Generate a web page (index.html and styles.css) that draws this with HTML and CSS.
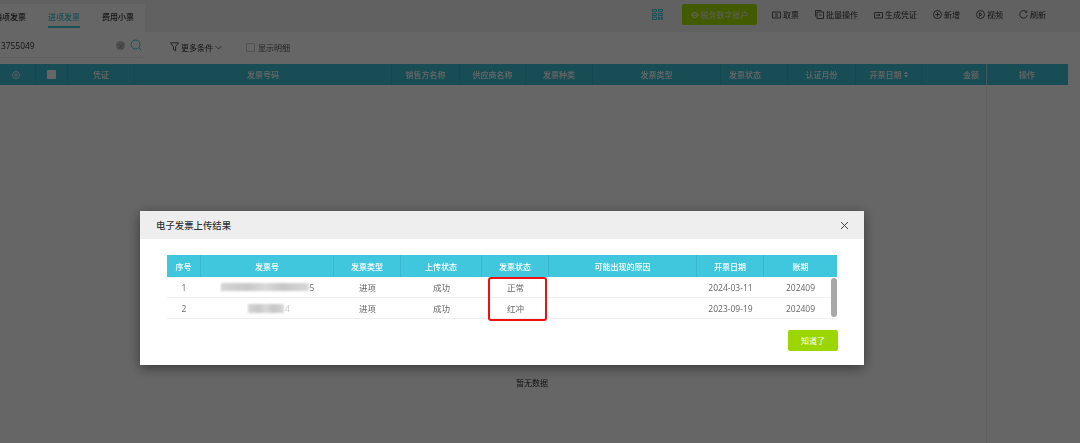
FILE: index.html
```html
<!DOCTYPE html>
<html lang="zh-CN">
<head>
<meta charset="utf-8">
<title>电子发票上传结果</title>
<link rel="stylesheet" href="styles.css">
</head>
<body>
<div class="page">
  <header class="topbar">
    <nav class="tabs">
      <span class="tab">销项发票</span>
      <span class="tab active">进项发票</span>
      <span class="tab">费用小票</span>
    </nav>
    <div class="actions">
      <svg class="qr" width="11" height="11" viewBox="0 0 11 11"><path d="M.5.500h4v2h-4zM6.500.500h4v2h-4zM.5 4.500h4v2h-4zM6.500 4.500h4v2h-4zM.5 8h4v2.500h-4zM6.500 8h1.200v2.500H6.500zM9.300 8h1.200v2.500H9.300z" fill="none" stroke="#41c7dd" stroke-width="1"/></svg>
      <button class="digital"><svg width="8" height="8" viewBox="0 0 8 8"><circle cx="4" cy="4" r="2.600" fill="none" stroke="#fff" stroke-width=".8"/><path d="M0 4h8" stroke="#fff" stroke-width=".8"/></svg>税务数字账户</button>
      <span class="action"><svg width="9" height="8" viewBox="0 0 9 8"><path d="M.5 1h8v6h-8zM3 3h3M3 5h3" fill="none" stroke="#333" stroke-width=".8"/></svg>取票</span>
      <span class="action"><svg width="9" height="9" viewBox="0 0 9 9"><path d="M.5 6.500v-6h6M2 2h6.500v6.500H2zM3.800 5h3" fill="none" stroke="#333" stroke-width=".8"/></svg>批量操作</span>
      <span class="action"><svg width="9" height="8" viewBox="0 0 9 8"><path d="M.5 1.500V7h8V1.500zM2 4h4M4.800 3l1.200 1-1.200 1" fill="none" stroke="#333" stroke-width=".8"/></svg>生成凭证</span>
      <span class="action"><svg width="9" height="9" viewBox="0 0 9 9"><circle cx="4.500" cy="4.500" r="4" fill="none" stroke="#333" stroke-width=".8"/><path d="M4.500 2.300v4.400M2.300 4.500h4.400" stroke="#333" stroke-width=".8"/></svg>新增</span>
      <span class="action"><svg width="9" height="9" viewBox="0 0 9 9"><circle cx="4.500" cy="4.500" r="4" fill="none" stroke="#333" stroke-width=".8"/><path d="M3.500 2.800l2.500 1.700-2.500 1.700z" fill="none" stroke="#333" stroke-width=".8"/></svg>视频</span>
      <span class="action"><svg width="9" height="9" viewBox="0 0 9 9"><path d="M7.500 2A3.800 3.800 0 1 0 8.300 5M7.800.6V2.400H6" fill="none" stroke="#333" stroke-width=".8"/></svg>刷新</span>
    </div>
  </header>

  <section class="filters">
    <div class="search">
      <span class="search-value">3755049</span>
      <span class="clear">×</span>
      <svg width="12" height="12" viewBox="0 0 12 12"><circle cx="5.500" cy="5.500" r="4.500" fill="none" stroke="#41c7dd" stroke-width="1"/><path d="M8.800 8.800l2.500 2.500" stroke="#41c7dd"/></svg>
    </div>
    <span class="more"><svg width="9" height="10" viewBox="0 0 9 10"><path d="M.5.800h8L5.600 4.500v4.300L3.400 7.500v-3z" fill="none" stroke="#333" stroke-width=".8"/></svg>更多条件<svg width="7" height="5" viewBox="0 0 7 5"><path d="M.5 1l3 3 3-3" fill="none" stroke="#333" stroke-width=".7"/></svg></span>
    <label class="detail"><span class="check"></span>显示明细</label>
  </section>

  <div class="grid-head">
    <span class="gear"><svg width="8" height="8" viewBox="0 0 8 8"><circle cx="4" cy="4" r="3.500" fill="none" stroke="#fff" stroke-width=".8"/><circle cx="4" cy="4" r="1.300" fill="none" stroke="#fff" stroke-width=".8"/></svg></span>
    <span><i class="head-check"></i></span>
    <span>凭证</span>
    <span>发票号码</span>
    <span>销售方名称</span>
    <span>供应商名称</span>
    <span>发票种类</span>
    <span>发票类型</span>
    <span class="status">发票状态</span>
    <span>认证月份</span>
    <span>开票日期 <svg width="4" height="7" viewBox="0 0 4 7"><path d="M0 3h4L2 .5zM0 4h4L2 6.500z" fill="#fff"/></svg></span>
    <span class="amount">金额</span>
    <span class="ops">操作</span>
  </div>
  <div class="grid-body">
    <div class="empty">暂无数据</div>
  </div>
</div>

<div class="mask"></div>

<div class="modal">
  <div class="modal-head">
    <span>电子发票上传结果</span>
    <svg width="9" height="9" viewBox="0 0 9 9"><path d="M1 1l7 7M8 1l-7 7" stroke="#444" stroke-width="1"/></svg>
  </div>
  <div class="modal-body">
    <div class="result">
      <div class="row head">
        <span>序号</span><span>发票号</span><span>发票类型</span><span>上传状态</span><span>发票状态</span><span>可能出现的原因</span><span>开票日期</span><span>账期</span>
      </div>
      <div class="row">
        <span>1</span><span class="masked"><i class="blur long"></i>5</span><span>进项</span><span>成功</span><span>正常</span><span></span><span>2024-03-11</span><span>202409</span>
      </div>
      <div class="row">
        <span>2</span><span class="masked"><i class="blur short"></i><b class="faint">4</b></span><span>进项</span><span>成功</span><span>红冲</span><span></span><span>2023-09-19</span><span>202409</span>
      </div>
      <div class="scroll"></div>
      <div class="mark"></div>
    </div>
    <div class="foot"><button class="ok">知道了</button></div>
  </div>
</div>
</body>
</html>
```

FILE: styles.css
```css
* { box-sizing: border-box; }
html, body { margin: 0; height: 100%; overflow: hidden; }
body {
  font-family: "Noto Sans CJK SC", "Open Sans", sans-serif;
  font-size: 8px;
  color: #333;
  background: #fff;
  filter: blur(.3px);
}
button { font-family: inherit; border: 0; padding: 0; }
svg { display: block; flex: none; }

.page { display: flex; flex-direction: column; height: 443px; }

.topbar {
  display: flex;
  justify-content: space-between;
  height: 32px;
  flex: none;
  background: #f2f2f2;
}
.tabs {
  display: flex;
  gap: 22px;
  height: 28px;
  margin-top: 4px;
  margin-left: -6px;
  width: 151px;
  background: #fff;
  font-weight: 500;
}
.tab { display: block; height: 24px; width: 32px; line-height: 26px; white-space: nowrap; }
.tab.active { color: #41c7dd; border-bottom: 2px solid #41c7dd; }

.actions { display: flex; align-items: center; height: 29px; padding-right: 34px; }
.qr { margin-right: 19px; }
.digital {
  display: flex;
  align-items: center;
  justify-content: center;
  gap: 2px;
  width: 75px;
  height: 21px;
  margin-right: 15px;
  border-radius: 2px;
  background: #a6e000;
  color: #e8e8e8;
  font-size: 8px;
}
.action { display: flex; align-items: center; gap: 2px; white-space: nowrap; margin-right: 16px; }
.action:last-child { margin-right: 0; }

.filters { display: flex; align-items: center; height: 32px; flex: none; }
.search {
  display: flex;
  align-items: center;
  width: 143px;
  height: 24px;
  padding: 0 1px;
  border-bottom: 1px solid #eee;
  margin-top: -5px;
}
.search-value { flex: 1; font-family: "Open Sans", sans-serif; font-size: 8.400px; }
.clear {
  width: 9px;
  height: 9px;
  margin-right: 5px;
  border-radius: 50%;
  background: #c4c4c4;
  color: #888;
  font-size: 8px;
  line-height: 9px;
  text-align: center;
}
.more { display: flex; align-items: center; gap: 2px; margin-left: 27px; margin-top: -2px; }
.detail { display: flex; align-items: center; gap: 3px; margin-left: 24px; margin-top: -2px; color: #555; }
.check { width: 9px; height: 9px; border: 1px solid #ccc; border-radius: 1px; }

.grid-head {
  display: grid;
  grid-template-columns: 36px 32px 67px 257px 68px 66px 67px 128px 67px 68px 66px 64px 81px;
  width: 1068px;
  height: 21px;
  flex: none;
  background: #3fc0d4;
  color: #fff;
  font-weight: 500;
}
.grid-head > span {
  display: flex;
  align-items: center;
  justify-content: center;
  gap: 2px;
  border-right: 1px solid #37b4c8;
}
.grid-head > .gear { padding-right: 4px; }
.grid-head > .status { padding-right: 18px; }
.grid-head > .amount { justify-content: flex-end; padding-right: 6px; }
.grid-head > .ops { border-left: 1px solid #9fe3ee; border-right: 0; }
.head-check { display: block; width: 9px; height: 9px; border-radius: 1px; background: #fff; }

.grid-body { flex: 1; position: relative; }
.grid-body::after {
  content: "";
  position: absolute;
  left: 986px;
  top: 0;
  bottom: 0;
  width: 1px;
  background: #eee;
}
.empty { width: 1064px; text-align: center; padding-top: 292px; }

.mask { position: fixed; inset: 0; background: rgba(0, 0, 0, .6); }

.modal {
  position: fixed;
  left: 140px;
  top: 211px;
  width: 724px;
  height: 154px;
  background: #fff;
  box-shadow: 0 3px 12px rgba(0, 0, 0, .45);
}
.modal-head {
  display: flex;
  justify-content: space-between;
  align-items: center;
  height: 28px;
  padding: 0 15px 0 16px;
  background: #eee;
  font-size: 9.400px;
  font-weight: 500;
}
.modal-body { padding: 16px 26px 0 27px; }
.result { position: relative; width: 670px; }
.row {
  display: grid;
  grid-template-columns: 34px 133px 67px 81px 67px 148px 67px 73px;
  height: 21px;
  border-bottom: 1px solid #eee;
  color: #666;
}
.row > span {
  display: flex;
  align-items: center;
  justify-content: center;
  font-size: 8.500px;
  font-family: "Open Sans", "Noto Sans CJK SC", sans-serif;
}
.row.head { height: 22px; background: #41c7dd; color: #fff; border-bottom: 0; font-weight: 500; }
.row.head > span { border-right: 1px solid #3ab9ce; font-size: 8px; font-family: "Noto Sans CJK SC", sans-serif; }
.row.head > span:last-child { border-right: 0; }
.masked { gap: 1px; }
.blur {
  display: block;
  height: 8px;
  background: linear-gradient(90deg, #d4d4d4, #c8c8c8 30%, #dadada 50%, #c6c6c6 70%, #d8d8d8);
  filter: blur(1px);
}
.blur.long { width: 88px; }
.blur.short { width: 36px; height: 9px; margin-left: 3px; }
.faint { font-weight: 400; color: #c4c4c4; }

.scroll {
  position: absolute;
  right: 0;
  top: 23px;
  width: 6px;
  height: 39px;
  border-radius: 3px;
  background: #a8a8a8;
}
.mark {
  position: absolute;
  left: 321px;
  top: 22px;
  width: 59px;
  height: 44px;
  border: 2px solid #f01010;
  border-radius: 3px;
}
.foot { display: flex; justify-content: flex-end; margin-top: 11px; }
.ok {
  width: 50px;
  height: 21px;
  border-radius: 2px;
  background: #9bd600;
  color: #fff;
  font-size: 8px;
}
```
